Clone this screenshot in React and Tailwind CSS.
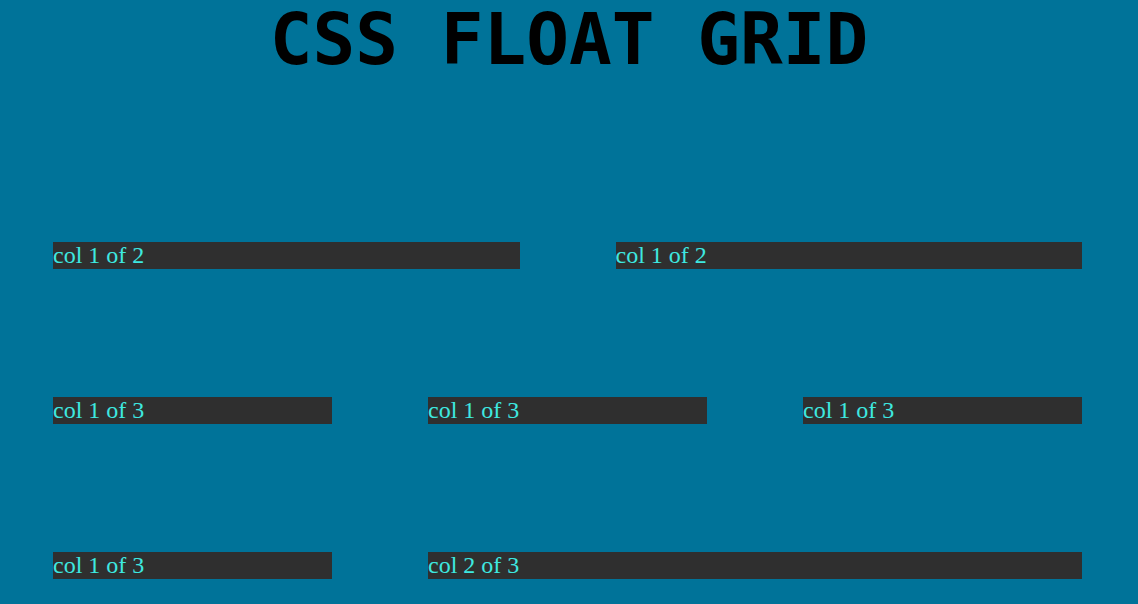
import React from 'react';

const Col = ({ label, className = '' }) => (
  <div className={`bg-[#2f2f2f] h-[27px] text-[24px] leading-[27px] text-[#3ee8e0] ${className}`}>
    {label}
  </div>
);

export default function App() {
  return (
    <div className="min-h-[604px] w-full bg-[#007399] overflow-hidden" style={{ fontFamily: '"Liberation Serif", "Times New Roman", serif' }}>
      {/* Title */}
      <h1
        className="text-center text-[71px] leading-[84px] -mt-[2px] h-[82px] font-bold text-black"
        style={{ fontFamily: '"DejaVu Sans Mono", monospace' }}
      >
        CSS FLOAT GRID
      </h1>

      <div className="ml-[53px] w-[1029px] pt-[162px] flex flex-col gap-[128px]">
        {/* Row 1 */}
        <div className="grid grid-cols-2 gap-x-[96px]">
          <Col label="col 1 of 2" />
          <Col label="col 1 of 2" />
        </div>

        {/* Row 2 */}
        <div className="grid grid-cols-3 gap-x-[96px]">
          <Col label="col 1 of 3" />
          <Col label="col 1 of 3" />
          <Col label="col 1 of 3" />
        </div>

        {/* Row 3 */}
        <div className="grid grid-cols-3 gap-x-[96px]">
          <Col label="col 1 of 3" />
          <Col label="col 2 of 3" className="col-span-2" />
        </div>
      </div>
    </div>
  );
}
